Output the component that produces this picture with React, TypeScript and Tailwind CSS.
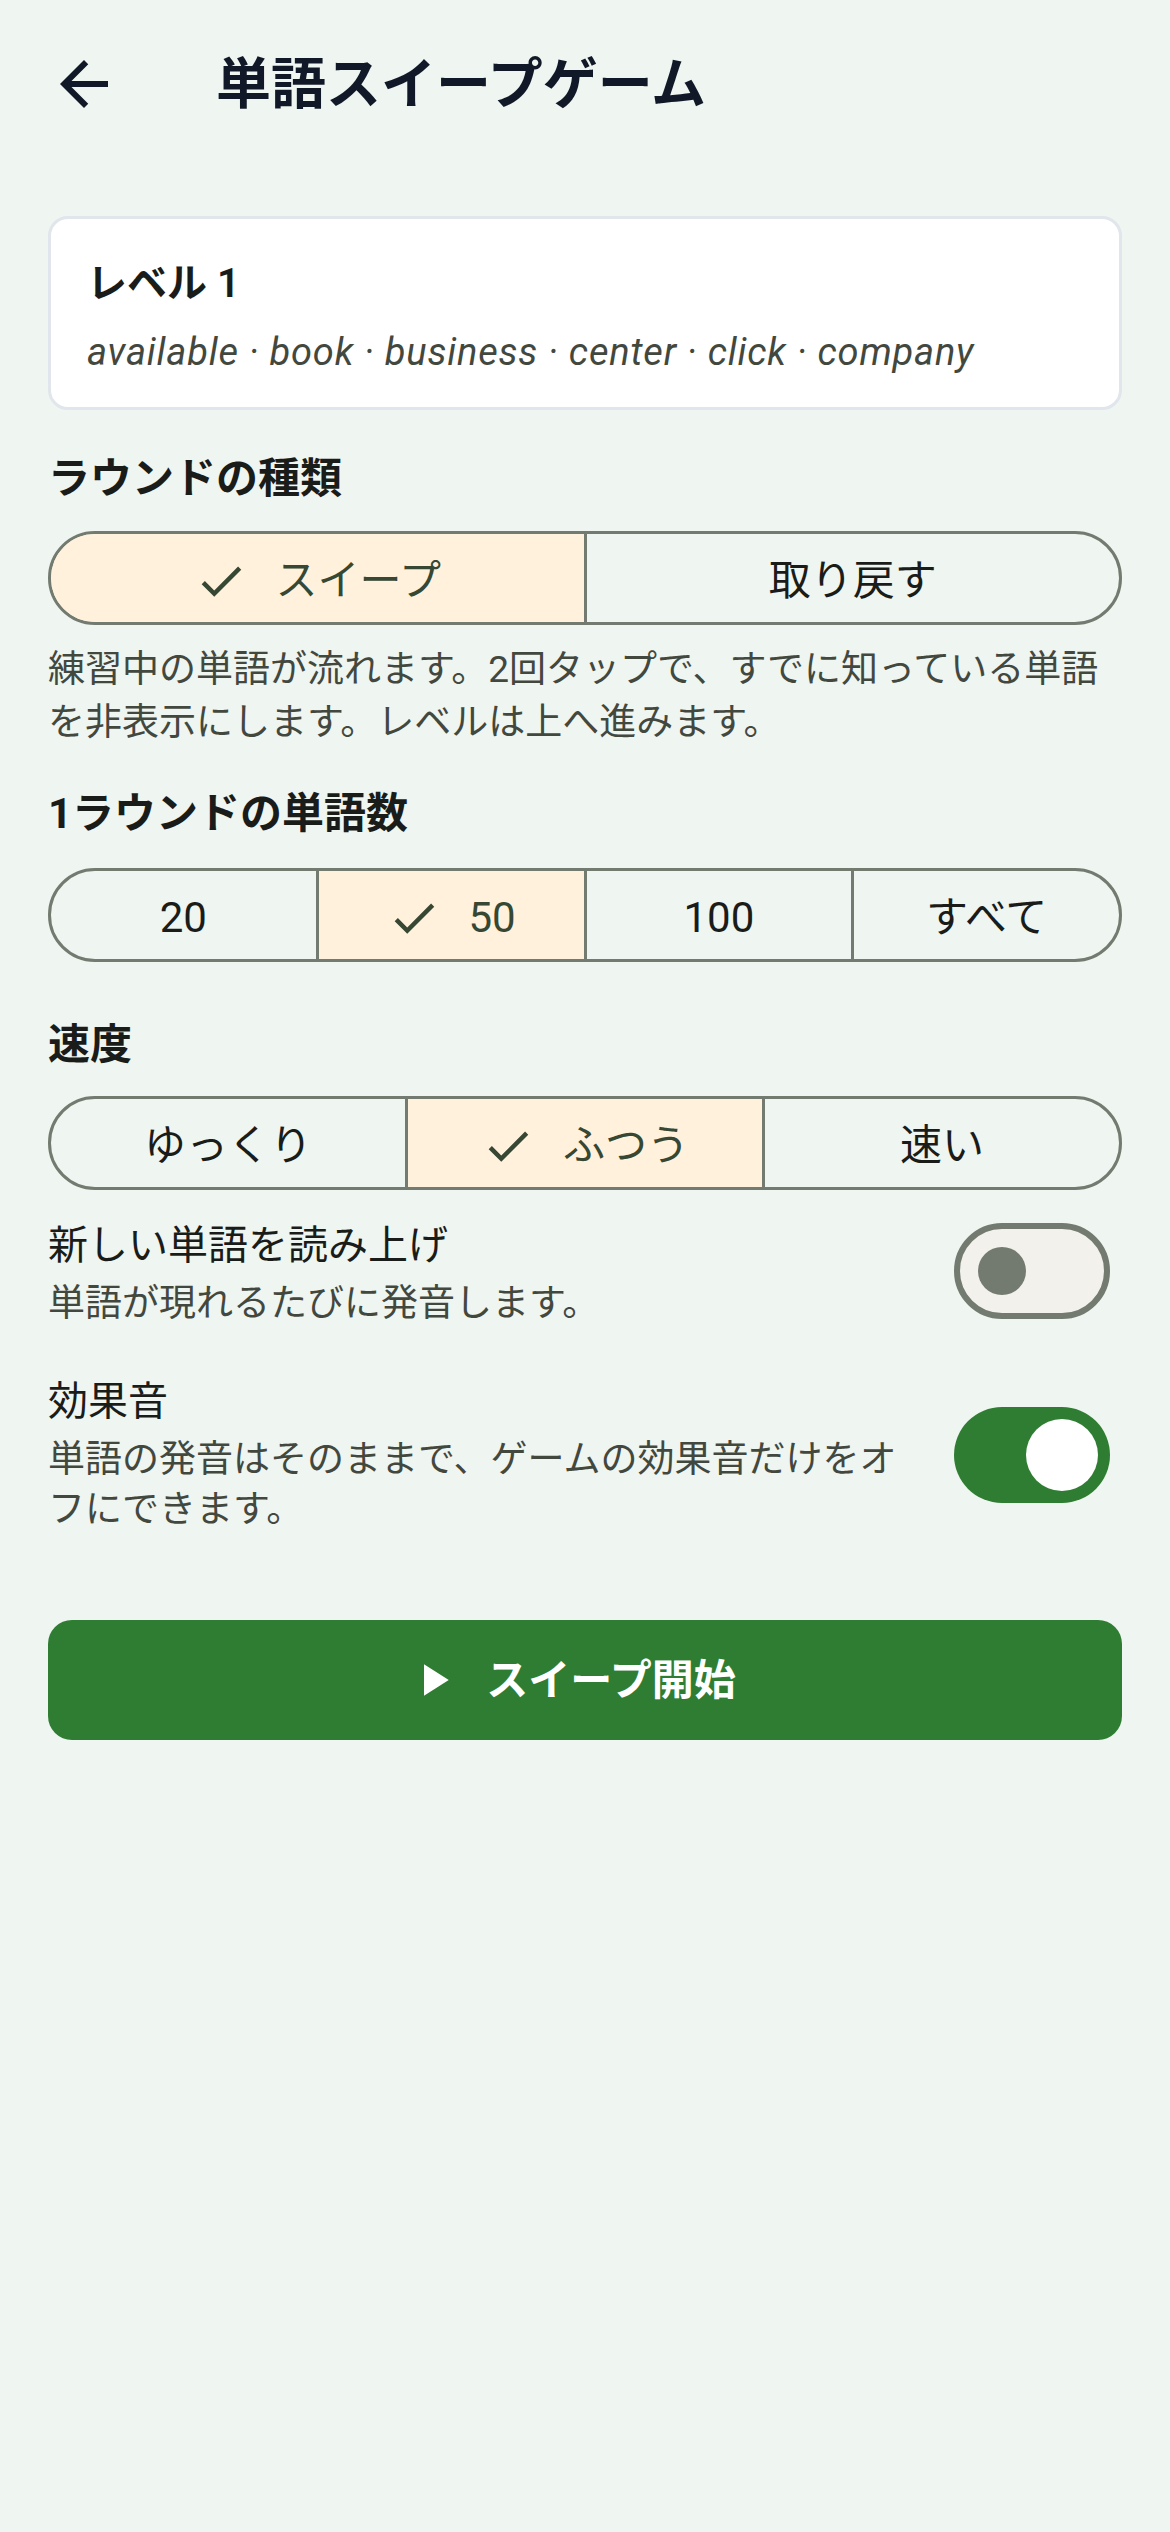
import { useState } from "react";

const CheckIcon = () => (
  <svg viewBox="0 0 24 24" className="w-[54px] h-[54px] shrink-0" fill="currentColor">
    <path d="M9 16.17L4.83 12l-1.42 1.41L9 19 21 7l-1.41-1.41z" />
  </svg>
);

type SegProps = { options: string[]; value: string; onChange: (v: string) => void };

const Segmented = ({ options, value, onChange }: SegProps) => {
  return (
    <div className="flex h-[94px] rounded-full border-[3px] border-[#737a6f] overflow-hidden">
      {options.map((opt, i) => {
        const selected = opt === value;
        return (
          <button
            key={opt}
            onClick={() => onChange(opt)}
            className={
              "flex-1 flex items-center justify-center gap-[28px] pt-[5px] text-[42px] " +
              (i > 0 ? "border-l-[3px] border-[#737a6f] " : "") +
              (selected ? "bg-[#fff1dc] text-[#364733]" : "text-[#1a1c19]")
            }
          >
            {selected && <CheckIcon />}
            <span>{opt}</span>
          </button>
        );
      })}
    </div>
  );
};

const Toggle = ({ on, onClick }: { on: boolean; onClick: () => void }) => {
  if (on) {
    return (
      <button
        onClick={onClick}
        className="shrink-0 w-[156px] h-[96px] mr-[12px] rounded-full bg-[#2e7d32] flex items-center justify-end pr-[12px]"
      >
        <span className="w-[72px] h-[72px] rounded-full bg-white" />
      </button>
    );
  }
  return (
    <button
      onClick={onClick}
      className="shrink-0 w-[156px] h-[96px] mr-[12px] -mt-[6px] rounded-full bg-[#f2f1ec] border-[6px] border-[#737a6f] flex items-center pl-[18px]"
    >
      <span className="w-[48px] h-[48px] rounded-full bg-[#737a6f]" />
    </button>
  );
};

export default function App() {
  const [mode, setMode] = useState("スイープ");
  const [count, setCount] = useState("50");
  const [speed, setSpeed] = useState("ふつう");
  const [speak, setSpeak] = useState(false);
  const [sound, setSound] = useState(true);

  return (
    <div className="min-h-[2532px] bg-[#eff5f0] font-['Roboto','Noto_Sans_CJK_JP',sans-serif]">
      <header className="flex items-center h-[168px] px-[48px]">
        <button className="w-[72px] h-[72px] text-[#111827]">
          <svg viewBox="0 0 24 24" className="w-[72px] h-[72px]" fill="currentColor">
            <path d="M20 11H7.83l5.59-5.59L12 4l-8 8 8 8 1.41-1.41L7.83 13H20v-2z" />
          </svg>
        </button>
        <h1 className="ml-[96px] text-[55px] font-bold text-[#111827]">単語スイープゲーム</h1>
      </header>

      <main className="px-[48px] pt-[48px]">
        <div className="rounded-[20px] border-[3px] border-[#e1e5ec] bg-white px-[36px] pt-[40px] pb-[32px]">
          <div className="text-[40px] leading-[50px] font-semibold text-[#1a1c19]">レベル 1</div>
          <div className="mt-[20px] text-[38px] leading-[46px] italic tracking-[0.8px] text-[#43483f]">
            available · book · business · center · click · company
          </div>
        </div>

        <h2 className="mt-[41px] text-[42px] leading-[56px] font-bold text-[#1a1c19]">ラウンドの種類</h2>
        <div className="mt-[24px]">
          <Segmented options={["スイープ", "取り戻す"]} value={mode} onChange={setMode} />
        </div>
        <p className="mt-[18px] text-[37px] leading-[53px] text-[#43483f]">
          練習中の単語が流れます。2回タップで、すでに知っている単語を非表示にします。レベルは上へ進みます。
        </p>

        <h2 className="mt-[37px] text-[42px] leading-[56px] font-bold text-[#1a1c19]">1ラウンドの単語数</h2>
        <div className="mt-[26px]">
          <Segmented options={["20", "50", "100", "すべて"]} value={count} onChange={setCount} />
        </div>

        <h2 className="mt-[55px] text-[42px] leading-[56px] font-bold text-[#1a1c19]">速度</h2>
        <div className="mt-[23px]">
          <Segmented options={["ゆっくり", "ふつう", "速い"]} value={speed} onChange={setSpeed} />
        </div>

        <div className="mt-[29px] flex items-center gap-[40px]">
          <div className="flex-1">
            <div className="text-[40px] leading-[54px] text-[#1a1c19]">新しい単語を読み上げ</div>
            <div className="mt-[6px] text-[37px] leading-[50px] text-[#43483f]">単語が現れるたびに発音します。</div>
          </div>
          <Toggle on={speak} onClick={() => setSpeak(!speak)} />
        </div>

        <div className="mt-[46px] flex items-center gap-[40px]">
          <div className="flex-1">
            <div className="text-[40px] leading-[54px] text-[#1a1c19]">効果音</div>
            <div className="mt-[6px] text-[37px] leading-[50px] text-[#43483f]">
              単語の発音はそのままで、ゲームの効果音だけをオフにできます。
            </div>
          </div>
          <Toggle on={sound} onClick={() => setSound(!sound)} />
        </div>

        <button className="mt-[85px] w-full h-[120px] rounded-[24px] bg-[#2e7d32] flex items-center justify-center gap-[26px] pr-[28px] text-white">
          <svg viewBox="0 0 24 24" className="w-[54px] h-[54px]" fill="currentColor">
            <path d="M8 5v14l11-7z" />
          </svg>
          <span className="text-[42px] font-bold">スイープ開始</span>
        </button>
      </main>
    </div>
  );
}
